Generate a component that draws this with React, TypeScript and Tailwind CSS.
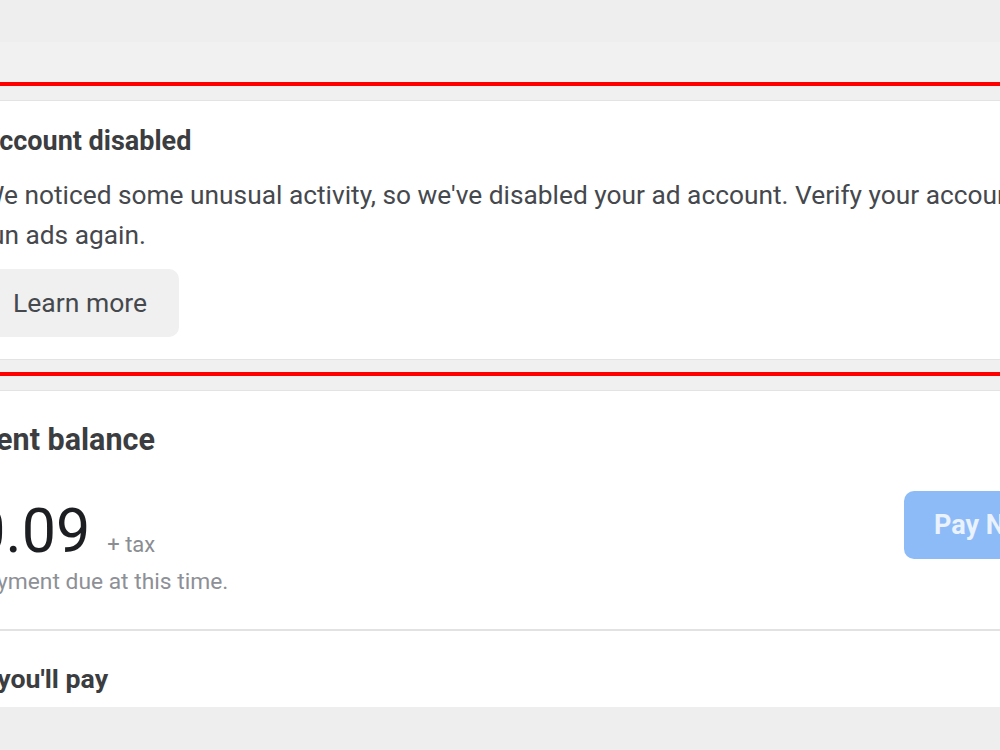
import React from "react";

function AlertCard() {
  return (
    <div className="bg-white border-y border-[#e3e3e3] pl-[101px] pt-[25px] pb-[22px]">
      <h2 className="text-[27px] leading-[30px] font-bold text-[#3b3d40]">Account disabled</h2>
      <p className="mt-[19px] text-[26.3px] leading-[40px] text-[#45484d] whitespace-nowrap">
        We noticed some unusual activity, so we've disabled your ad account. Verify your account to
        <br />
        run ads again.
      </p>
      <button className="mt-[14px] h-[68px] px-[32px] rounded-[10px] bg-[#f0f0f0] text-[26.5px] text-[#45484d]">
        Learn more
      </button>
    </div>
  );
}

function BalanceCard() {
  return (
    <div className="bg-white border-t border-[#e3e3e3] h-[317px]">
      <div className="pl-[57px] pt-[29px]">
        <h2 className="text-[30.5px] leading-[40px] font-bold text-[#3b3d40]">Current balance</h2>
        <div className="mt-[31px] flex items-start">
          <div className="w-[967px] shrink-0 pt-[10px]">
            <div className="flex items-baseline gap-[17px]">
              <span className="text-[61px] leading-[61px] text-[#1c1e21]">$0.09</span>
              <span className="text-[22px] text-[#8a8d91]">+ tax</span>
            </div>
            <p className="mt-[6px] text-[22.8px] leading-[28px] text-[#8d9096]">No payment due at this time.</p>
          </div>
          <button className="h-[68px] px-[30px] rounded-[10px] bg-[#8dbbf8] text-[27px] font-bold text-[#eaf2fd] whitespace-nowrap">
            Pay Now
          </button>
        </div>
      </div>
      <div className="mt-[33px] h-[2px] bg-[#e2e2e2]" />
      <div className="pl-[49px] pt-[31px]">
        <h3 className="text-[26.7px] leading-[34px] font-bold text-[#3b3d40]">What you'll pay</h3>
      </div>
    </div>
  );
}

export default function App() {
  return (
    <div className="w-[1000px] h-[750px] overflow-hidden bg-[#eeeeee] font-['Roboto',sans-serif]">
      <div className="-ml-[120px] w-[1400px]">
        <div className="h-[42px] bg-[#eeeeee]" />
        <div className="h-[40px] bg-[#f1f1f1]" />
        <div className="border-y-[4px] border-[#ff0000] bg-[#f0f0f0] pt-[14px] pb-[12px]">
          <AlertCard />
        </div>
        <div className="h-[14px] bg-[#f0f0f0]" />
        <BalanceCard />
      </div>
    </div>
  );
}
